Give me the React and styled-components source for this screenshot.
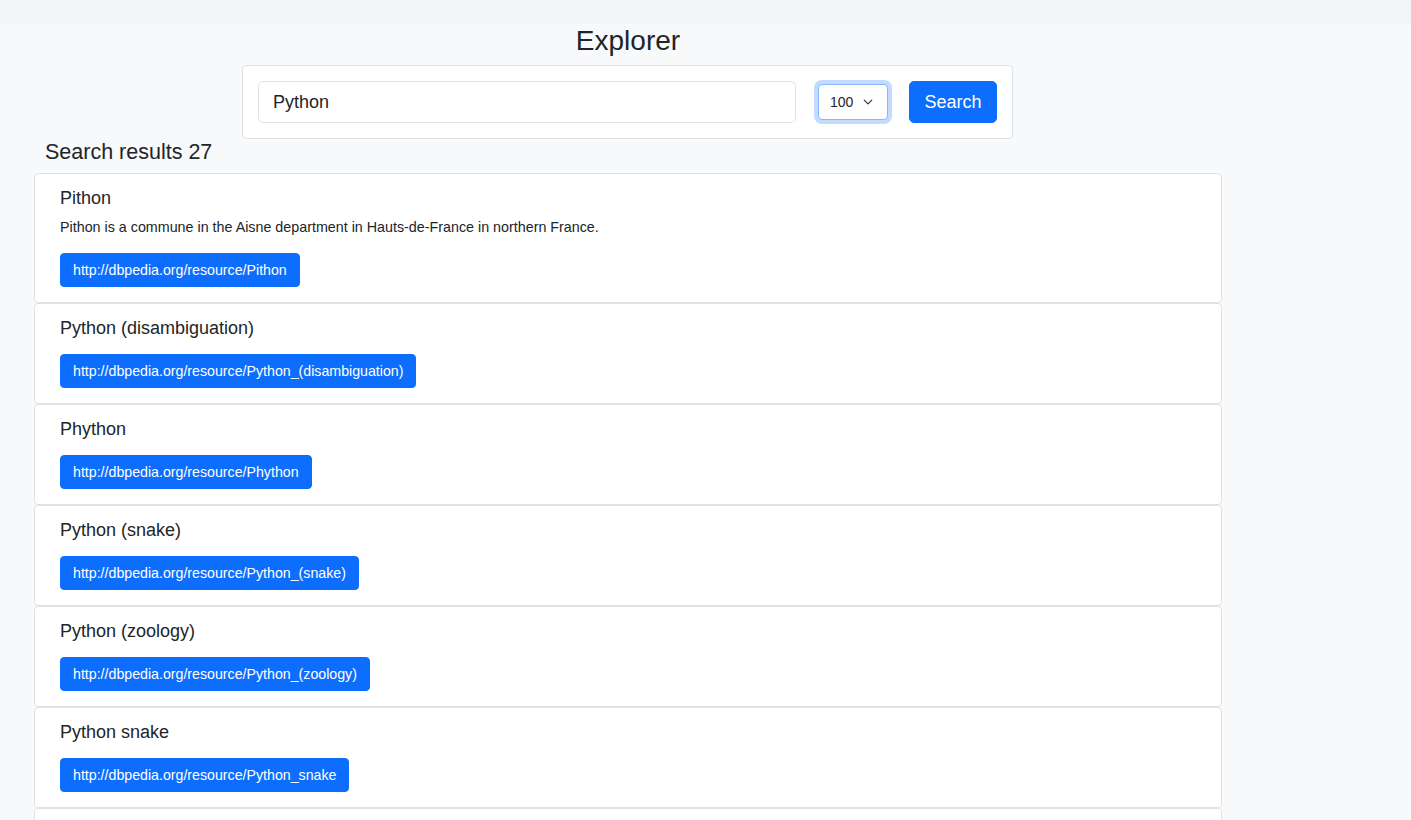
import React from 'react'
import styled, { createGlobalStyle } from 'styled-components'

const COLORS = {
  PAGE: '#f8f9fa',
  STRIP: '#f4f5f8',
  TEXT: '#212529',
  BORDER: '#dee2e6',
  BLUE: '#0d6efd'
}

const RESULTS = [
  {
    title: 'Pithon',
    text: 'Pithon is a commune in the Aisne department in Hauts-de-France in northern France.',
    uri: 'http://dbpedia.org/resource/Pithon'
  },
  { title: 'Python (disambiguation)', uri: 'http://dbpedia.org/resource/Python_(disambiguation)' },
  { title: 'Phython', uri: 'http://dbpedia.org/resource/Phython' },
  { title: 'Python (snake)', uri: 'http://dbpedia.org/resource/Python_(snake)' },
  { title: 'Python (zoology)', uri: 'http://dbpedia.org/resource/Python_(zoology)' },
  { title: 'Python snake', uri: 'http://dbpedia.org/resource/Python_snake' },
  { title: 'Python (programming language)', uri: 'http://dbpedia.org/resource/Python_(programming_language)' }
]

const GlobalStyle = createGlobalStyle`
  html, body {
    margin: 0;
    padding: 0;
    background: ${COLORS.PAGE};
    font-family: "Liberation Sans", Arial, sans-serif;
    color: ${COLORS.TEXT};
  }
  ::-webkit-scrollbar {
    display: none;
  }
`

const Chevron = () => (
  <svg width="10" height="10" viewBox="0 0 16 16" fill="none">
    <path d="M2 5l6 6 6-6" stroke="#343a40" strokeWidth="2" strokeLinecap="round" strokeLinejoin="round" />
  </svg>
)

const App = () => (
  <>
    <GlobalStyle />
    <TopStrip />
    <Main>
      <Title>Explorer</Title>
      <SearchCard>
        <SearchInput defaultValue="Python" />
        <SelectBox>
          <Select defaultValue="100">
            <option>10</option>
            <option>50</option>
            <option>100</option>
          </Select>
          <SelectIcon><Chevron /></SelectIcon>
        </SelectBox>
        <SearchButton>Search</SearchButton>
      </SearchCard>
      <ResultsLabel>Search results 27</ResultsLabel>
      <ResultList>
        {RESULTS.map(r => (
          <ResultCard key={r.uri}>
            <ResultTitle>{r.title}</ResultTitle>
            {r.text && <ResultText>{r.text}</ResultText>}
            <UriButton>{r.uri}</UriButton>
          </ResultCard>
        ))}
      </ResultList>
    </Main>
  </>
)

const TopStrip = styled.div`
  height: 24px;
  background: ${COLORS.STRIP};
`

const Main = styled.main`
  width: 1188px;
  margin-left: 34px;
  display: flex;
  flex-direction: column;
`

const Title = styled.h1`
  margin: 0 0 7px;
  font-size: 28px;
  line-height: 34px;
  font-weight: 400;
  text-align: center;
`

const SearchCard = styled.div`
  margin-left: 208px;
  width: 771px;
  box-sizing: border-box;
  display: flex;
  align-items: center;
  padding: 15px;
  background: #fff;
  border: 1px solid ${COLORS.BORDER};
  border-radius: 4px;
`

const SearchInput = styled.input`
  flex: 1;
  min-width: 0;
  height: 42px;
  box-sizing: border-box;
  padding: 0 14px;
  font-family: inherit;
  font-size: 18px;
  color: ${COLORS.TEXT};
  border: 1px solid ${COLORS.BORDER};
  border-radius: 5px;
  outline: none;
`

const SelectBox = styled.div`
  position: relative;
  margin-left: 22px;
  width: 70px;
  height: 36px;
`

const Select = styled.select`
  appearance: none;
  width: 100%;
  height: 100%;
  box-sizing: border-box;
  padding: 0 0 0 11px;
  font-family: inherit;
  font-size: 14px;
  color: ${COLORS.TEXT};
  background: #fff;
  border: 1px solid #86b7fe;
  border-radius: 4px;
  box-shadow: 0 0 0 4px rgba(13, 110, 253, 0.25);
  outline: none;
`

const SelectIcon = styled.span`
  position: absolute;
  right: 15px;
  top: 13px;
  display: flex;
  pointer-events: none;
`

const SearchButton = styled.button`
  margin-left: 21px;
  width: 88px;
  height: 42px;
  font-family: inherit;
  font-size: 18px;
  color: #fff;
  background: ${COLORS.BLUE};
  border: 1px solid ${COLORS.BLUE};
  border-radius: 5px;
`

const ResultsLabel = styled.h2`
  margin: 0 0 8px 11px;
  font-size: 21.5px;
  line-height: 26px;
  font-weight: 400;
`

const ResultList = styled.div`
  display: flex;
  flex-direction: column;
`

const ResultCard = styled.div`
  display: flex;
  flex-direction: column;
  align-items: flex-start;
  padding: 12px 25px 15px;
  background: #fff;
  border: 1px solid ${COLORS.BORDER};
  border-radius: 4px;
`

const ResultTitle = styled.h5`
  margin: 0 0 7px;
  font-size: 18px;
  line-height: 24px;
  font-weight: 400;
`

const ResultText = styled.p`
  margin: 0 0 8px;
  font-size: 14.3px;
  line-height: 21px;
`

const UriButton = styled.button`
  margin-top: 7px;
  height: 34px;
  padding: 0 12px;
  font-family: inherit;
  font-size: 14.2px;
  color: #fff;
  background: ${COLORS.BLUE};
  border: 1px solid ${COLORS.BLUE};
  border-radius: 4px;
`

export default App
